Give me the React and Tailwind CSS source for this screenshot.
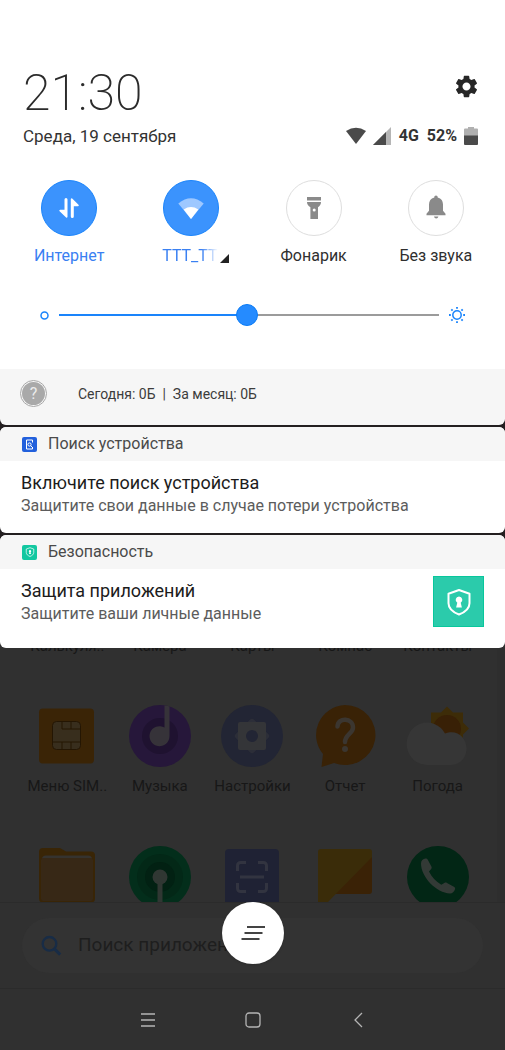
import React, { useState } from "react";
import { MdSettings } from "react-icons/md";

const MobileDataIcon = () => (
  <svg width="28" height="28" viewBox="0 0 28 28" fill="#fff">
    <path d="M9.500 5.500a1.200 1.200 0 0 1 3 0v17.300a.8.8 0 0 1-1.400.6L4.600 17.200a.8.8 0 0 1 .6-1.400h4.300z" />
    <path d="M18.800 22.500a1.200 1.200 0 0 1-3 0V5.200a.8.8 0 0 1 1.400-.6l6.300 6.200a.8.8 0 0 1-.6 1.400h-4.100z" />
  </svg>
);

const WifiTileIcon = () => (
  <svg width="28" height="28" viewBox="0 0 28 28">
    <path d="M1.300 9.500Q14-1 26.700 9.500L14 25z" fill="#9ec8ff" />
    <path d="M6.700 15.400Q14 10.600 21.300 15.400L14 25z" fill="#fff" />
  </svg>
);

const TorchIcon = () => (
  <svg width="28" height="28" viewBox="0 0 28 28" fill="#8a8a8a">
    <path d="M7 3h14v3.500H7zM7 8h14c0 2.600-1.200 3.800-3 5.200V25h-7.600V13.200C8.400 11.800 7 10.600 7 8z" />
    <circle cx="14.200" cy="16" r="1.500" fill="#fff" />
  </svg>
);

const BellIcon = () => (
  <svg width="28" height="28" viewBox="0 0 28 28" fill="#8a8a8a">
    <path d="M14 1.500c1 0 1.700.7 1.700 1.900 3.600.8 5.300 3.600 5.300 7.200v6.200l2.500 3v1.400h-19v-1.400l2.500-3v-6.200c0-3.600 1.700-6.400 5.300-7.200 0-1.200.7-1.900 1.700-1.900z" />
    <path d="M12 22.500h4.400c-.3 1.300-1.100 1.900-2.200 1.900s-1.900-.6-2.200-1.900z" />
  </svg>
);

const Shield = ({ size }) => (
  <svg width={size} height={size} viewBox="0 0 28 28">
    <path
      d="M14 2l10.500 3.700v9.500c0 5.300-4.600 9-10.500 11.300C8.100 24.200 3.500 20.500 3.500 15.200V5.700z"
      fill="none"
      stroke="#fff"
      strokeWidth="2"
      strokeLinejoin="round"
    />
    <path d="M14 8.500a3.400 3.400 0 0 1 1.700 6.300l1.200 4.700h-5.800l1.200-4.700A3.400 3.400 0 0 1 14 8.500z" fill="#fff" />
  </svg>
);

const FindDeviceIcon = () => (
  <span className="flex size-[15px] items-center justify-center rounded-xs bg-[#2260dc]">
    <svg width="11" height="11" viewBox="0 0 11 11" fill="none" stroke="#fff">
      <path d="M8.500 3.500V1h-6v9h6V8" strokeWidth="1" />
      <circle cx="5.500" cy="5.500" r="1.600" strokeWidth="1" />
      <path d="M6.700 6.700l2 2" strokeWidth="1" />
    </svg>
  </span>
);

const SecurityIcon = () => (
  <span className="flex size-[15px] items-center justify-center rounded-xs bg-[#13c8a1]">
    <Shield size={10} />
  </span>
);

const SearchIcon = () => (
  <svg width="24" height="24" viewBox="0 0 24 24" fill="none" stroke="#182c46">
    <circle cx="9.500" cy="9.800" r="6.800" strokeWidth="2.400" />
    <path d="M14.200 14.600l6 6" strokeWidth="3" />
  </svg>
);

const SimIcon = () => (
  <svg width="64" height="64" viewBox="0 0 64 64">
    <rect x="4" y="4.500" width="55" height="55" rx="4" fill="#3a2406" />
    <rect x="17.500" y="17.500" width="28" height="28" rx="4" fill="#382e1d" stroke="#241603" />
    <path d="M17 38h29M27 17v8h19M36 17v8M27 38v8M36 38v8" fill="none" stroke="#241603" />
  </svg>
);

const MusicIcon = () => (
  <svg width="64" height="64" viewBox="0 0 64 64">
    <circle cx="32" cy="32" r="31" fill="#26173a" />
    <circle cx="32" cy="32" r="18" fill="#1f1230" />
    <path d="M36.500 1.500q3 .2 5 1V32a10 10 0 1 1-5-8.500z" fill="#363339" />
  </svg>
);

const SettingsAppIcon = () => (
  <svg width="64" height="64" viewBox="0 0 64 64">
    <circle cx="32" cy="32" r="31" fill="#222534" />
    <rect x="19" y="19" width="26" height="26" rx="3" fill="#2c2e38" transform="rotate(45 32 32)" />
    <rect x="18" y="18" width="28" height="28" rx="2" fill="#343538" />
    <circle cx="32" cy="32" r="6" fill="#222534" />
  </svg>
);

const ReportIcon = () => (
  <svg width="64" height="64" viewBox="0 0 64 64">
    <path d="M32 1a30.500 30 0 1 1-11 58L8.500 63l1.500-13A30.500 30 0 0 1 32 1z" fill="#392206" />
    <path
      d="M24.500 22.500c.5-10 15.500-8.500 15.500 1 0 6-8 7-8 14.500"
      fill="none"
      stroke="#3b3630"
      strokeWidth="4.500"
      strokeLinecap="round"
    />
    <circle cx="32" cy="45" r="3" fill="#3b3630" />
  </svg>
);

const WeatherIcon = () => (
  <svg width="64" height="64" viewBox="0 0 64 64">
    <path d="M41 2.500l6 6h10v10l6 6-6 6v10H25v-32h10z" fill="#3d2c08" />
    <circle cx="41" cy="25" r="14" fill="#382006" />
    <path
      d="M21 61A20.500 21.200 0 1 1 39 29.500C51 24.500 61 34 60.500 45c0 9-7 16-16 16z"
      fill="#363636"
    />
  </svg>
);

const FolderIcon = () => (
  <svg width="64" height="64" viewBox="0 0 64 64">
    <path d="M4 7a4 4 0 0 1 4-4h17l6 3.500h25a4 4 0 0 1 4 4v43a4 4 0 0 1-4 4H8a4 4 0 0 1-4-4z" fill="#392506" />
    <path d="M7 14q0-3.500 4-3.500h42q4 0 4 3.500z" fill="#35332f" />
    <rect x="6" y="13" width="52" height="43" rx="2" fill="#372816" />
  </svg>
);

const CleanerIcon = () => (
  <svg width="64" height="64" viewBox="0 0 64 64">
    <circle cx="32" cy="32" r="31" fill="#032e1b" />
    <circle cx="32" cy="32" r="23" fill="#032817" />
    <circle cx="32" cy="32" r="15" fill="#022113" />
    <circle cx="32" cy="32" r="7.500" fill="#303733" />
    <path d="M29.500 36h5v28h-5z" fill="#303733" />
  </svg>
);

const ScannerIcon = () => (
  <svg width="64" height="64" viewBox="0 0 64 64">
    <rect x="5" y="4" width="54" height="58" rx="4" fill="#1f2234" />
    <path
      d="M17.500 26v-5.500a3 3 0 0 1 3-3H26M38 17.500h5.500a3 3 0 0 1 3 3V26M46.500 38v5.500a3 3 0 0 1-3 3H38M26 46.500h-5.500a3 3 0 0 1-3-3V38M20 32h24"
      fill="none"
      stroke="#323440"
      strokeWidth="3"
    />
  </svg>
);

const NotesIcon = () => (
  <svg width="64" height="64" viewBox="0 0 64 64">
    <path d="M59 11v35a3 3 0 0 1-3 3H20z" fill="#3a2206" />
    <path d="M5 7a3 3 0 0 1 3-3h48a3 3 0 0 1 3 3v5L14 58H5z" fill="#3a2c09" />
  </svg>
);

const DialerIcon = () => (
  <svg width="64" height="64" viewBox="0 0 64 64">
    <circle cx="32" cy="32" r="31" fill="#022615" />
    <path
      d="M15 18.500c0-3 2-4.500 4.500-5 1.200-.2 1.800.4 2.300 1.300l3.600 6.700c.5 1 .4 1.800-.3 2.600l-2.100 2.400c2.800 5.500 6.800 9.800 12.300 13.300l3-1.800c.9-.6 1.800-.6 2.700-.1l6.900 3.900c1 .6 1.500 1.300 1.100 2.400-.9 2.600-2.500 4.300-5 4.300C30.500 48 15 32 15 18.500z"
      fill="#333a36"
    />
  </svg>
);

const tiles = [
  { name: "Интернет", icon: MobileDataIcon, active: true },
  { name: "TTT_TT", icon: WifiTileIcon, active: true, more: true },
  { name: "Фонарик", icon: TorchIcon },
  { name: "Без звука", icon: BellIcon },
];

const hiddenApps = ["Калькуля..", "Камера", "Карты", "Компас", "Контакты"];

const apps = [
  { name: "Меню SIM..", icon: SimIcon },
  { name: "Музыка", icon: MusicIcon },
  { name: "Настройки", icon: SettingsAppIcon },
  { name: "Отчет", icon: ReportIcon },
  { name: "Погода", icon: WeatherIcon },
];

const bottomApps = [
  { name: "Папка", icon: FolderIcon },
  { name: "Очистка", icon: CleanerIcon },
  { name: "Сканер", icon: ScannerIcon },
  { name: "Заметки", icon: NotesIcon },
  { name: "Телефон", icon: DialerIcon },
];

const StatusIcons = () => (
  <div className="flex h-5 items-center text-base font-bold text-[#333]">
    <svg width="20" height="18" viewBox="0 0 20 18">
      <path d="M0 4Q10-2.500 20 4L10 17z" fill="#4a4a4a" />
    </svg>
    <svg className="ml-[7px]" width="18" height="18" viewBox="0 0 18 18">
      <path d="M18 0v18H0z" fill="#b5b5b5" />
      <path d="M13 5v13H0z" fill="#4a4a4a" />
    </svg>
    <span className="ml-2">4G</span>
    <span className="ml-2">52%</span>
    <svg className="ml-[7px]" width="14" height="18" viewBox="0 0 14 18">
      <path d="M4 0h6v1.500h3a1 1 0 0 1 1 1V9H0V2.500a1 1 0 0 1 1-1h3z" fill="#b0b0b0" />
      <path d="M0 8.500h14V17a1 1 0 0 1-1 1H1a1 1 0 0 1-1-1z" fill="#4a4a4a" />
    </svg>
  </div>
);

const QuickTile = ({ tile }) => (
  <button className="flex flex-col items-center gap-[10px]">
    <span
      className={`flex size-14 items-center justify-center rounded-full border ${
        tile.active ? "border-[#1a84fb] bg-[#3b93fd]" : "border-[#dedede] bg-white"
      }`}
    >
      {React.createElement(tile.icon)}
    </span>
    <span className={`flex h-5 items-center text-base leading-5 ${tile.active ? "text-[#3a80f2]" : "text-[#2f2f2f]"}`}>
      {tile.more ? (
        <>
          <span className="ml-2 [mask-image:linear-gradient(to_right,black_70%,transparent)]">
            {tile.name}
          </span>
          <svg className="ml-[2px] mt-1" width="9" height="9" viewBox="0 0 9 9">
            <path d="M9 0v9H0z" fill="#222" />
          </svg>
        </>
      ) : (
        tile.name
      )}
    </span>
  </button>
);

const Notification = ({ app, icon, title, text, children }) => (
  <article className="overflow-hidden rounded-md bg-white">
    <div className="flex h-[34px] items-center gap-[11px] bg-[#f6f6f6] px-[22px] text-base text-[#4a4a4a]">
      {icon}
      {app}
    </div>
    <div className="flex justify-between px-[21px]">
      <div className="pt-[10px] pb-4">
        <h2 className="text-lg leading-6 text-[#1c1c1c]">{title}</h2>
        <p className="text-base leading-[22px] text-[#5c5c5c]">{text}</p>
      </div>
      {children}
    </div>
  </article>
);

const MAX_BRIGHTNESS = 255;

const App = () => {
  const [brightness, setBrightness] = useState(126);
  const filled = (brightness / MAX_BRIGHTNESS) * 100;

  return (
    <div className="flex min-h-screen flex-col bg-[#303030] font-[Roboto,'Noto_Sans',sans-serif]">
      {/* Shade: clock, toggles and brightness */}
      <header className="bg-white pt-[68px]">
        <div className="flex items-start justify-between pr-[25px] pl-[23px]">
          <time className="text-[50px] leading-[50px] font-extralight text-[#2b2b2b]">21:30</time>
          <button aria-label="Настройки" className="pt-[5px]">
            <MdSettings size={27} color="#262626" />
          </button>
        </div>
        <div className="mt-2 flex items-center justify-between pr-[27px] pl-[23px]">
          <p className="text-[17px] leading-5 text-[#333]">Среда, 19 сентября</p>
          <StatusIcons />
        </div>

        <div className="mt-[34px] grid grid-cols-4 px-2">
          {tiles.map((tile) => (
            <QuickTile key={tile.name} tile={tile} />
          ))}
        </div>

        <div className="flex items-center gap-[10px] px-10 pt-[38px] pb-[43px]">
          <svg width="9" height="9" viewBox="0 0 9 9">
            <circle cx="4.500" cy="4.500" r="3.500" fill="none" stroke="#1a84fb" strokeWidth="1.500" />
          </svg>
          <input
            type="range"
            aria-label="Яркость"
            max={MAX_BRIGHTNESS}
            value={brightness}
            onChange={(e) => setBrightness(Number(e.target.value))}
            style={{
              backgroundImage: `linear-gradient(to right, #1a84fb ${filled}%, #9b9b9b ${filled}%)`,
            }}
            className="h-[22px] min-w-0 flex-1 appearance-none bg-[length:100%_2px] bg-center bg-no-repeat [&::-webkit-slider-thumb]:size-[22px] [&::-webkit-slider-thumb]:appearance-none [&::-webkit-slider-thumb]:rounded-full [&::-webkit-slider-thumb]:border [&::-webkit-slider-thumb]:border-[#0a7bf5] [&::-webkit-slider-thumb]:bg-[#258bff]"
          />
          <svg width="16" height="16" viewBox="0 0 16 16" fill="none" stroke="#1a84fb">
            <circle cx="8" cy="8" r="4.200" strokeWidth="1.500" />
            <path
              d="M8 0v1.800M8 14.200V16M0 8h1.800M14.200 8H16M2.300 2.300l1.300 1.300M12.400 12.400l1.300 1.300M2.300 13.700l1.300-1.300M12.400 3.600l1.300-1.300"
              strokeWidth="1.800"
            />
          </svg>
        </div>
      </header>

      {/* Notifications */}
      <main className="bg-[#303030]">
        <div className="flex flex-col gap-[2px] bg-[linear-gradient(#231f20,#231f20_80%,#303030_80%)]">
          <section className="flex items-center gap-[31px] rounded-b-md bg-[#f6f6f6] px-5 pt-[11px] pb-[18px]">
            <span className="flex size-[27px] items-center justify-center rounded-full border border-[#a8a8a8] bg-[#f6f6f6]">
              <span className="flex size-[23px] items-center justify-center rounded-full bg-[#a9a9a9] text-base text-[#ececec]">
                ?
              </span>
            </span>
            <p className="text-sm whitespace-pre text-[#3c3c3c]">Сегодня: 0Б  |  За месяц: 0Б</p>
          </section>
          <Notification
            app="Поиск устройства"
            icon={<FindDeviceIcon />}
            title="Включите поиск устройства"
            text="Защитите свои данные в случае потери устройства"
          />
          <Notification
            app="Безопасность"
            icon={<SecurityIcon />}
            title="Защита приложений"
            text="Защитите ваши личные данные"
          >
            <div className="mt-[7px] mb-[21px] flex size-[51px] items-center justify-center border border-[#08c79c] bg-[#2bcbab]">
              <Shield size={28} />
            </div>
          </Notification>
        </div>
      </main>

      {/* Dimmed launcher */}
      <section className="border-r-8 border-[#2e2e2e] pr-[13px] pl-[21px] text-[15px] leading-5 text-[#171717]">
        <div className="grid h-2 grid-cols-5 content-end overflow-hidden text-center">
          {hiddenApps.map((name) => (
            <span key={name}>{name}</span>
          ))}
        </div>
        <div className="mt-12 grid grid-cols-5">
          {apps.map((app) => (
            <div key={app.name} className="flex flex-col items-center gap-2 whitespace-nowrap">
              {React.createElement(app.icon)}
              {app.name}
            </div>
          ))}
        </div>
        <div className="mt-[49px] grid h-[57px] grid-cols-5 justify-items-center overflow-hidden">
          {bottomApps.map((app) => (
            <div key={app.name} role="img" aria-label={app.name}>
              {React.createElement(app.icon)}
            </div>
          ))}
        </div>
      </section>

      <div className="relative border-y border-[#2b2b2b] px-[22px] py-[15px]">
        <label className="flex h-[55px] items-center gap-[14px] rounded-full bg-[#333] pl-[18px]">
          <SearchIcon />
          <input
            type="text"
            aria-label="Поиск"
            placeholder="Поиск приложений"
            className="min-w-0 flex-1 bg-transparent text-[19px] outline-none placeholder:text-[#1e1e1e]"
          />
        </label>
        <button
          aria-label="Очистить уведомления"
          className="absolute -top-px left-1/2 flex size-[62px] -translate-x-1/2 items-center justify-center rounded-full bg-white shadow"
        >
          <svg width="26" height="18" viewBox="0 0 26 18" stroke="#444" strokeWidth="2">
            <path d="M7 3h18M4.500 9h18M1.500 15h18" />
          </svg>
        </button>
      </div>

      <nav className="flex flex-1 items-center justify-center gap-[89px] py-5">
        <button aria-label="Меню">
          <svg width="16" height="16" viewBox="0 0 16 16" stroke="#b4b4b4" strokeWidth="1.300">
            <path d="M1 2h14M1 8h14M1 14h14" />
          </svg>
        </button>
        <button aria-label="Домой">
          <svg width="16" height="16" viewBox="0 0 16 16" fill="none" stroke="#b4b4b4" strokeWidth="1.300">
            <rect x="1" y="1" width="14" height="14" rx="3" />
          </svg>
        </button>
        <button aria-label="Назад">
          <svg width="16" height="16" viewBox="0 0 16 16" fill="none" stroke="#b4b4b4" strokeWidth="1.300">
            <path d="M12 1L5 8l7 7" />
          </svg>
        </button>
      </nav>
    </div>
  );
};

export default App;
